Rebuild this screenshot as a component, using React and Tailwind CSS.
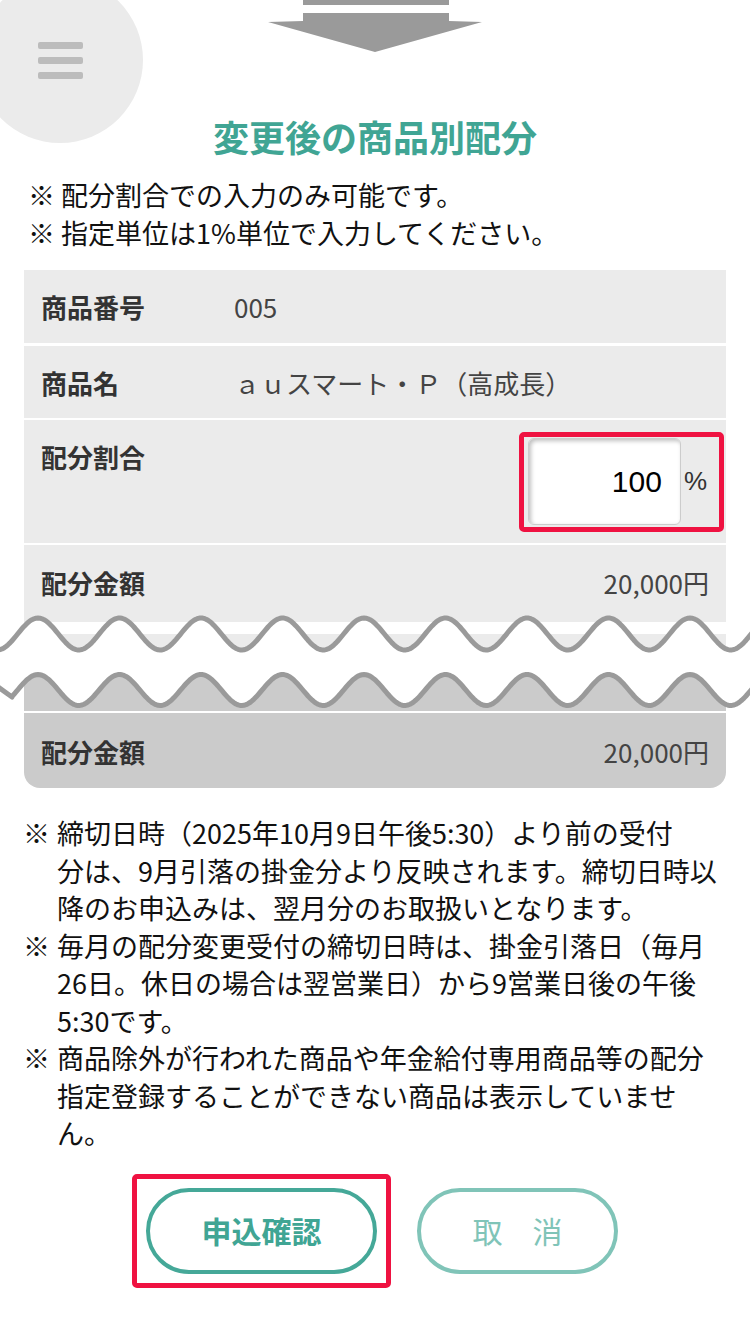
import React from 'react';

// wave break drawn between the two parts of the table
const PERIOD = 81.5;
const X0 = 38;

const wavePoints = (cy, amp, kink) => {
  const pts = [];
  if (kink) {
    pts.push([-2, cy - 3]);
    pts.push([12, cy + 7]);
  }
  for (let x = kink ? 12 : -4; x <= 754; x += 2) {
    pts.push([x, cy - amp * Math.cos((2 * Math.PI * (x - X0)) / PERIOD)]);
  }
  return pts;
};

const upper = wavePoints(34, 16, false);
const lower = wavePoints(90, 15.5, true);
const toPath = (pts) => pts.map((p, i) => `${i ? 'L' : 'M'}${p[0].toFixed(1)} ${p[1].toFixed(1)}`).join(' ');
const fillPath = toPath([...upper, ...lower.slice().reverse()]) + ' Z';

const notes = [
  ['締切日時（2025年10月9日午後5:30）より前の受付', '分は、9月引落の掛金分より反映されます。締切日時以', '降のお申込みは、翌月分のお取扱いとなります。'],
  ['毎月の配分変更受付の締切日時は、掛金引落日（毎月', '26日。休日の場合は翌営業日）から9営業日後の午後', '5:30です。'],
  ['商品除外が行われた商品や年金給付専用商品等の配分', '指定登録することができない商品は表示していませ', 'ん。'],
];

const Row = ({ label, children, className }) => (
  <div className={`flex px-[17px] pt-[19px] bg-[#ebebeb] ${className}`}>
    <div className="w-[193px] shrink-0 font-bold text-[26px] leading-[36px] text-[#333]">{label}</div>
    {children}
  </div>
);

export default function App() {
  return (
    <div className="relative w-[750px] min-h-[1334px] bg-white overflow-hidden font-['Noto_Sans_CJK_JP','Noto_Sans',sans-serif] text-[#222]">
      {/* floating menu button */}
      <div className="absolute left-[-23px] top-[-23px] w-[166px] h-[166px] rounded-full bg-[#ebebeb] flex flex-col items-center justify-center gap-[8px] z-10">
        <span className="block w-[45px] h-[7px] rounded-[2px] bg-[#bcbcbc]" />
        <span className="block w-[45px] h-[7px] rounded-[2px] bg-[#bcbcbc]" />
        <span className="block w-[45px] h-[7px] rounded-[2px] bg-[#bcbcbc]" />
      </div>

      {/* arrow */}
      <div className="flex justify-center">
        <svg width="216" height="53" viewBox="0 0 216 53">
          <rect x="36" y="0" width="146" height="5" fill="#9a9a9a" />
          <polygon points="36,13 182,13 182,21 215,22 108,52 1,22 36,21" fill="#9a9a9a" />
        </svg>
      </div>

      <h1 className="mt-[59px] text-center font-bold text-[36px] leading-[48px] text-[#40a594]">変更後の商品別配分</h1>

      <div className="mt-[16px] px-[28px] text-[27px] leading-[38px] text-[#111]">
        <p>※ 配分割合での入力のみ可能です。</p>
        <p>※ 指定単位は1%単位で入力してください。</p>
      </div>

      {/* table upper part */}
      <div className="mt-[18px] mx-[24px]">
        <Row label="商品番号" className="h-[73px]">
          <span className="text-[26px] leading-[36px] text-[#444]">005</span>
        </Row>
        <Row label="商品名" className="h-[72px] mt-[3px]">
          <span className="text-[26px] leading-[36px] text-[#444]">ａｕスマート・Ｐ（高成長）</span>
        </Row>
        <div className="flex justify-between h-[123px] mt-[2px] bg-[#ebebeb] pl-[17px] pr-[2px]">
          <div className="pt-[19px] font-bold text-[26px] leading-[36px] text-[#333]">配分割合</div>
          <div className="mt-[12px] self-start flex items-center border-[5px] border-[#ef1241] rounded-[5px] pl-[4px] pt-[1px] pb-[2px] pr-[12px]">
            <div className="w-[153px] h-[87px] bg-white border border-[#cccccc] rounded-[6px] shadow-[inset_2px_2px_4px_rgba(0,0,0,0.25)] flex items-center justify-end pr-[18px] font-['Liberation_Sans',sans-serif] text-[30px] text-black">
              100
            </div>
            <span className="ml-[3px] font-['Liberation_Sans',sans-serif] text-[26px] text-[#333]">%</span>
          </div>
        </div>
        <div className="flex justify-between items-start h-[77px] mt-[2px] bg-[#ebebeb] px-[17px] pt-[20px]">
          <span className="font-bold text-[26px] leading-[36px] text-[#333]">配分金額</span>
          <span className="text-[26px] leading-[36px] text-[#444]">20,000円</span>
        </div>
      </div>

      {/* wave break */}
      <div className="relative h-[91px]">
        <div className="mx-[24px] flex flex-col">
          <div className="h-[12px] bg-white" />
          <div className="h-[40px] bg-[#ebebeb]" />
          <div className="h-[37px] bg-[#cbcbcb]" />
          <div className="h-[2px] bg-white" />
        </div>
        <svg className="absolute left-0 top-[-22px]" width="750" height="120" viewBox="0 0 750 120">
          <path d={fillPath} fill="#ffffff" />
          <path d={toPath(upper)} fill="none" stroke="#9a9a9a" strokeWidth="5" strokeLinejoin="round" />
          <path d={toPath(lower)} fill="none" stroke="#9a9a9a" strokeWidth="5" strokeLinejoin="round" />
        </svg>
      </div>

      {/* table lower part */}
      <div className="mx-[24px] h-[75px] bg-[#cbcbcb] rounded-b-[16px] flex justify-between items-start px-[17px] pt-[21px]">
        <span className="font-bold text-[26px] leading-[36px] text-[#333]">配分金額</span>
        <span className="text-[26px] leading-[36px] text-[#444]">20,000円</span>
      </div>

      {/* notes */}
      <div className="mt-[26px] ml-[23px] text-[27px] leading-[37.5px] text-[#111]">
        {notes.map((lines, i) => (
          <div key={i} className="flex">
            <span className="w-[34px] shrink-0">※</span>
            <div className="whitespace-nowrap">
              {lines.map((l, j) => (
                <React.Fragment key={j}>
                  {j > 0 && <br />}
                  {l}
                </React.Fragment>
              ))}
            </div>
          </div>
        ))}
      </div>

      {/* buttons */}
      <div className="mt-[22px] flex justify-center items-center gap-[26px]">
        <div className="border-[5px] border-[#ef1241] rounded-[5px] p-[9px]">
          <button className="w-[231px] h-[86px] rounded-full border-[4px] border-[#45a898] bg-white font-bold text-[30px] text-[#40a594]">
            申込確認
          </button>
        </div>
        <button className="w-[201px] h-[86px] rounded-full border-[4px] border-[#80c4b8] bg-white text-[30px] text-[#80c4b8]">
          取　消
        </button>
      </div>
    </div>
  );
}
